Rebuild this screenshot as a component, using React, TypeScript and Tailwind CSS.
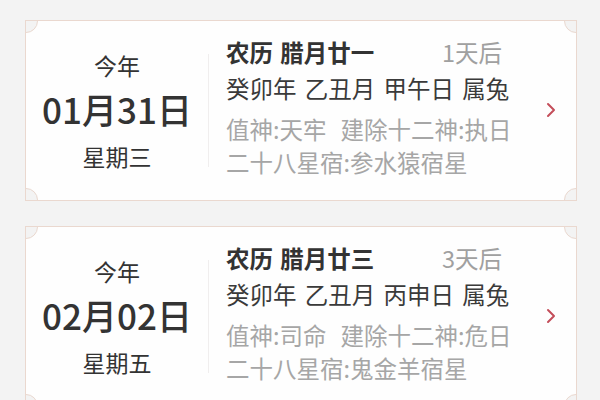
type DayItem = {
  date: string;
  week: string;
  lunar: string;
  after: string;
  ganzhi: string;
  zhishen: string;
  jianchu: string;
  xingxiu: string;
};

const days: DayItem[] = [
  {
    date: '01月31日',
    week: '星期三',
    lunar: '农历 腊月廿一',
    after: '1天后',
    ganzhi: '癸卯年 乙丑月 甲午日 属兔',
    zhishen: '值神:天牢',
    jianchu: '建除十二神:执日',
    xingxiu: '二十八星宿:参水猿宿星',
  },
  {
    date: '02月02日',
    week: '星期五',
    lunar: '农历 腊月廿三',
    after: '3天后',
    ganzhi: '癸卯年 乙丑月 丙申日 属兔',
    zhishen: '值神:司命',
    jianchu: '建除十二神:危日',
    xingxiu: '二十八星宿:鬼金羊宿星',
  },
];

const Notch = ({ pos }: { pos: string }) => (
  <span
    className={`pointer-events-none absolute h-[24px] w-[24px] rounded-full border border-[#ead8cf] bg-[#f3f3f3] ${pos}`}
  />
);

const DayCard = ({ day }: { day: DayItem }) => (
  <article className="relative flex h-[181px] shrink-0 overflow-hidden border border-[#ead8cf] bg-[#fefefe]">
    <Notch pos="-left-[12px] -top-[12px]" />
    <Notch pos="-right-[12px] -top-[12px]" />
    <Notch pos="-left-[12px] -bottom-[12px]" />
    <Notch pos="-right-[12px] -bottom-[12px]" />

    {/* left: date */}
    <div className="flex w-[182px] shrink-0 flex-col items-center justify-center text-[#333]">
      <div className="text-[23px] leading-[30px]">今年</div>
      <div className="mt-[7px] text-[35px] font-medium leading-[44px]">{day.date}</div>
      <div className="mt-[10px] text-[23px] leading-[30px]">{day.week}</div>
    </div>

    <div className="my-auto h-[113px] w-px bg-[#f0eeee]" />

    {/* right: lunar info */}
    <div className="flex flex-1 items-start pl-[17px] pr-[20px] pt-[15px] text-[23.5px]">
      <div className="flex-1">
        <div className="flex h-[32px] w-[276px] items-center justify-between leading-[32px]">
          <span className="font-bold text-[#333] [word-spacing:2px]">{day.lunar}</span>
          <span className="text-[#a0a0a0]">{day.after}</span>
        </div>
        <div className="mt-[4px] h-[32px] whitespace-nowrap leading-[32px] text-[#3a3a3a] [word-spacing:3px]">
          {day.ganzhi}
        </div>
        <div className="mt-[9px] h-[32px] whitespace-nowrap leading-[32px] text-[#a6a6a6]">
          {day.zhishen}
          <span className="ml-[14px]">{day.jianchu}</span>
        </div>
        <div className="mt-[1px] h-[32px] whitespace-nowrap leading-[32px] text-[#a6a6a6]">
          {day.xingxiu}
        </div>
      </div>
      <svg
        viewBox="0 0 10 16"
        className="-mt-[16px] h-[16px] w-[10px] shrink-0 self-center"
        fill="none"
        stroke="#c44e5a"
        strokeWidth={2}
        strokeLinecap="round"
        strokeLinejoin="round"
      >
        <path d="M2 2 L8 8 L2 14" />
      </svg>
    </div>
  </article>
);

export default function App() {
  return (
    <div
      className="flex h-[400px] w-[600px] flex-col gap-[25px] overflow-hidden bg-[#f3f3f3] pl-[25px] pr-[23px] pt-[20px]"
      style={{ fontFamily: '"Noto Sans CJK SC", "Noto Sans", sans-serif' }}
    >
      {days.map((day) => (
        <DayCard key={day.date} day={day} />
      ))}
    </div>
  );
}
